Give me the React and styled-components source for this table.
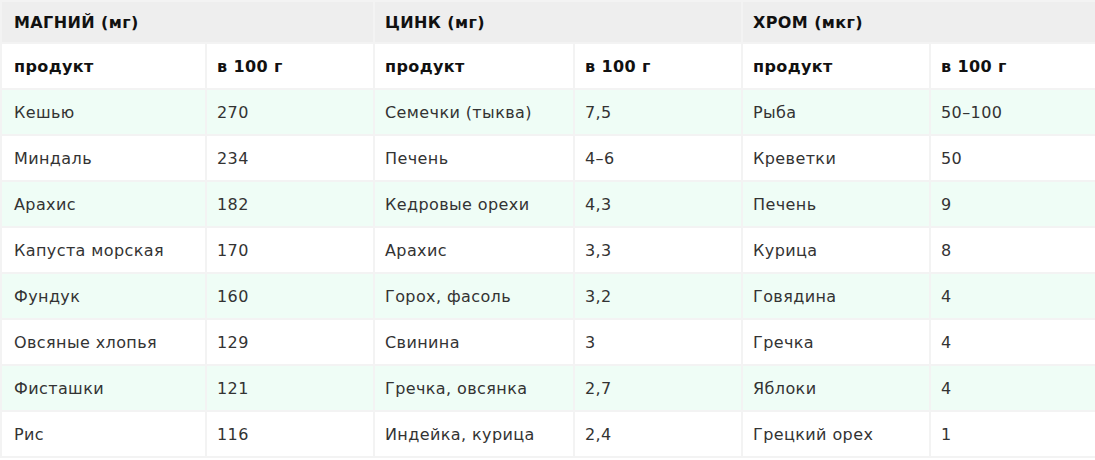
import React from 'react';
import styled, { createGlobalStyle } from 'styled-components';

const columns = [
  {
    title: 'МАГНИЙ (мг)',
    rows: [
      ['Кешью', '270'],
      ['Миндаль', '234'],
      ['Арахис', '182'],
      ['Капуста морская', '170'],
      ['Фундук', '160'],
      ['Овсяные хлопья', '129'],
      ['Фисташки', '121'],
      ['Рис', '116'],
    ],
  },
  {
    title: 'ЦИНК (мг)',
    rows: [
      ['Семечки (тыква)', '7,5'],
      ['Печень', '4–6'],
      ['Кедровые орехи', '4,3'],
      ['Арахис', '3,3'],
      ['Горох, фасоль', '3,2'],
      ['Свинина', '3'],
      ['Гречка, овсянка', '2,7'],
      ['Индейка, курица', '2,4'],
    ],
  },
  {
    title: 'ХРОМ (мкг)',
    rows: [
      ['Рыба', '50–100'],
      ['Креветки', '50'],
      ['Печень', '9'],
      ['Курица', '8'],
      ['Говядина', '4'],
      ['Гречка', '4'],
      ['Яблоки', '4'],
      ['Грецкий орех', '1'],
    ],
  },
];

const widths = [203, 166, 198, 166, 186, 170];

const App = () => (
  <>
    <GlobalStyle />
    <Table>
      <colgroup>
        {widths.map((w, i) => <col key={i} style={{ width: w }} />)}
      </colgroup>
      <thead>
        <TitleRow>
          {columns.map(c => (
            <TitleCell key={c.title} colSpan={2}>{c.title}</TitleCell>
          ))}
        </TitleRow>
        <tr>
          {columns.map(c => (
            <React.Fragment key={c.title}>
              <HeadCell>продукт</HeadCell>
              <HeadCell>в 100 г</HeadCell>
            </React.Fragment>
          ))}
        </tr>
      </thead>
      <tbody>
        {columns[0].rows.map((_, r) => (
          <Row key={r} $striped={r % 2 === 0}>
            {columns.map(c => (
              <React.Fragment key={c.title}>
                <Cell>{c.rows[r][0]}</Cell>
                <Cell>{c.rows[r][1]}</Cell>
              </React.Fragment>
            ))}
          </Row>
        ))}
      </tbody>
    </Table>
  </>
);

export default App;

const GlobalStyle = createGlobalStyle`
  body {
    margin: 0;
    background: #ffffff;
    font-family: "DejaVu Sans", "Noto Sans", sans-serif;
    color: #333333;
    overflow: hidden;
  }
`;

const Table = styled.table`
  border-collapse: separate;
  border-spacing: 2px;
  background: #f3f3f3;
  table-layout: fixed;
  width: 1101px;
  margin: 0;
`;

const TitleRow = styled.tr`
  height: 40px;
`;

const TitleCell = styled.th`
  background: #eeeeee;
  color: #111111;
  text-align: left;
  font-weight: 700;
  font-size: 16px;
  letter-spacing: 0.4px;
  padding: 0 10px;
  vertical-align: middle;
  &:first-child { padding-left: 12px; }
`;

const HeadCell = styled.th`
  background: #ffffff;
  color: #111111;
  height: 44px;
  text-align: left;
  font-weight: 700;
  font-size: 16px;
  letter-spacing: 0.4px;
  padding: 0 10px;
  &:first-child { padding-left: 12px; }
`;

const Row = styled.tr`
  height: 44px;
  background: ${p => (p.$striped ? '#effdf6' : '#ffffff')};
`;

const Cell = styled.td`
  font-size: 16px;
  font-weight: 400;
  letter-spacing: 0.4px;
  padding: 0 10px;
  white-space: nowrap;
  &:first-child { padding-left: 12px; }
`;
